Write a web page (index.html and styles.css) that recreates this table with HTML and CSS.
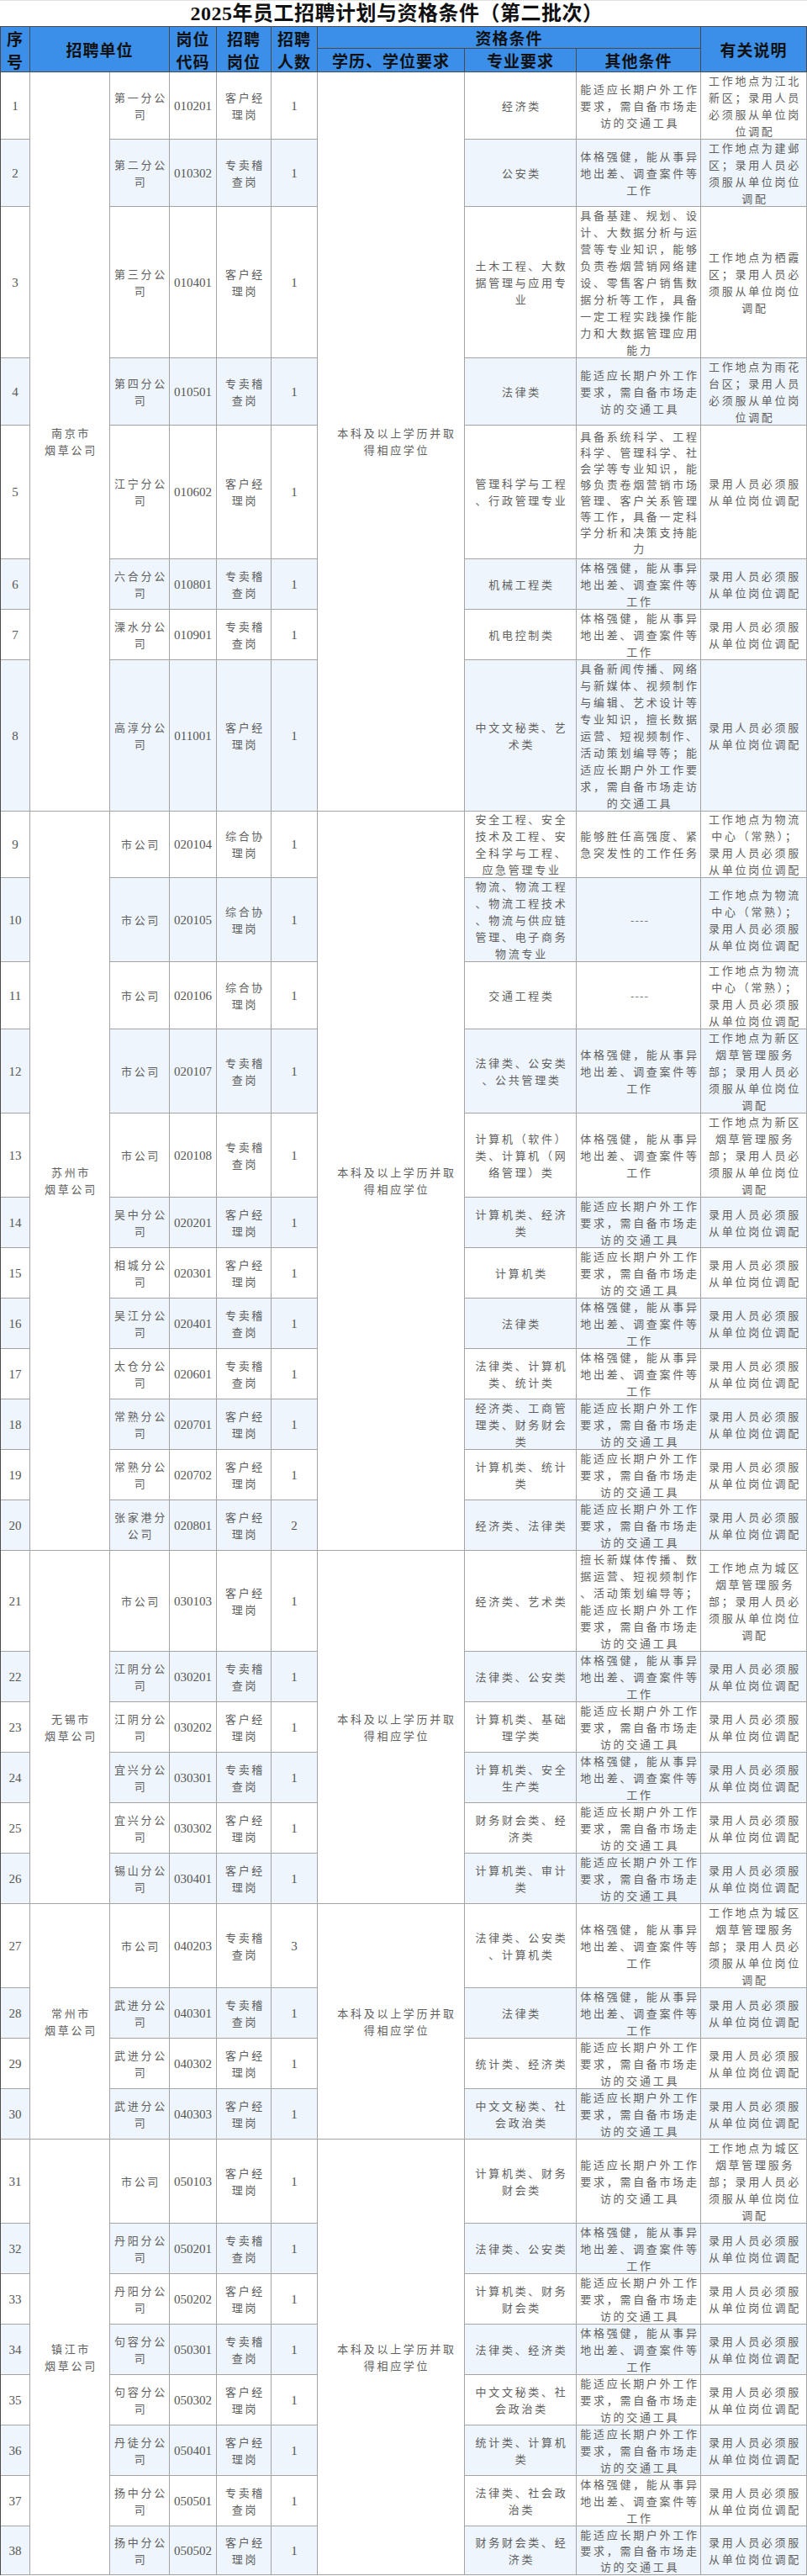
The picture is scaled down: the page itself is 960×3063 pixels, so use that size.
FILE: index.html
```html
<!DOCTYPE html>
<html lang="zh-CN">
<head>
<meta charset="utf-8">
<title>2025年员工招聘计划与资格条件（第二批次）</title>
<link rel="stylesheet" href="styles.css">
</head>
<body>
<div class="title">2025年员工招聘计划与资格条件（第二批次）</div>
<div class="grid">
<div class="row head">
<div class="h r2">序<br>号</div><div class="h r2 s2">招聘单位</div><div class="h r2">岗位<br>代码</div><div class="h r2">招聘<br>岗位</div><div class="h r2">招聘<br>人数</div><div class="h s3">资格条件</div><div class="h r2">有关说明</div>
<div class="h">学历、学位要求</div><div class="h">专业要求</div><div class="h">其他条件</div>
</div>

<div class="row"><div class="c n">1</div><div class="c m r8">南京市<br>烟草公司</div><div class="c">第一分公<br>司</div><div class="c n">010201</div><div class="c">客户经<br>理岗</div><div class="c n">1</div><div class="c m r8 edu">本科及以上学历并取<br>得相应学位</div><div class="c">经济类</div><div class="c">能适应长期户外工作<br>要求，需自备市场走<br>访的交通工具</div><div class="c">工作地点为江北<br>新区；录用人员<br>必须服从单位岗<br>位调配</div></div>
<div class="row alt"><div class="c n">2</div><div class="c">第二分公<br>司</div><div class="c n">010302</div><div class="c">专卖稽<br>查岗</div><div class="c n">1</div><div class="c">公安类</div><div class="c">体格强健，能从事异<br>地出差、调查案件等<br>工作</div><div class="c">工作地点为建邺<br>区；录用人员必<br>须服从单位岗位<br>调配</div></div>
<div class="row"><div class="c n">3</div><div class="c">第三分公<br>司</div><div class="c n">010401</div><div class="c">客户经<br>理岗</div><div class="c n">1</div><div class="c">土木工程、大数<br>据管理与应用专<br>业</div><div class="c">具备基建、规划、设<br>计、大数据分析与运<br>营等专业知识，能够<br>负责卷烟营销网络建<br>设、零售客户销售数<br>据分析等工作，具备<br>一定工程实践操作能<br>力和大数据管理应用<br>能力</div><div class="c">工作地点为栖霞<br>区；录用人员必<br>须服从单位岗位<br>调配</div></div>
<div class="row alt"><div class="c n">4</div><div class="c">第四分公<br>司</div><div class="c n">010501</div><div class="c">专卖稽<br>查岗</div><div class="c n">1</div><div class="c">法律类</div><div class="c">能适应长期户外工作<br>要求，需自备市场走<br>访的交通工具</div><div class="c">工作地点为雨花<br>台区；录用人员<br>必须服从单位岗<br>位调配</div></div>
<div class="row"><div class="c n">5</div><div class="c">江宁分公<br>司</div><div class="c n">010602</div><div class="c">客户经<br>理岗</div><div class="c n">1</div><div class="c">管理科学与工程<br>、行政管理专业</div><div class="c tight">具备系统科学、工程<br>科学、管理科学、社<br>会学等专业知识，能<br>够负责卷烟营销市场<br>管理、客户关系管理<br>等工作，具备一定科<br>学分析和决策支持能<br>力</div><div class="c">录用人员必须服<br>从单位岗位调配</div></div>
<div class="row alt"><div class="c n">6</div><div class="c">六合分公<br>司</div><div class="c n">010801</div><div class="c">专卖稽<br>查岗</div><div class="c n">1</div><div class="c">机械工程类</div><div class="c">体格强健，能从事异<br>地出差、调查案件等<br>工作</div><div class="c">录用人员必须服<br>从单位岗位调配</div></div>
<div class="row"><div class="c n">7</div><div class="c">溧水分公<br>司</div><div class="c n">010901</div><div class="c">专卖稽<br>查岗</div><div class="c n">1</div><div class="c">机电控制类</div><div class="c">体格强健，能从事异<br>地出差、调查案件等<br>工作</div><div class="c">录用人员必须服<br>从单位岗位调配</div></div>
<div class="row alt"><div class="c n">8</div><div class="c">高淳分公<br>司</div><div class="c n">011001</div><div class="c">客户经<br>理岗</div><div class="c n">1</div><div class="c">中文文秘类、艺<br>术类</div><div class="c">具备新闻传播、网络<br>与新媒体、视频制作<br>与编辑、艺术设计等<br>专业知识，擅长数据<br>运营、短视频制作、<br>活动策划编导等；能<br>适应长期户外工作要<br>求，需自备市场走访<br>的交通工具</div><div class="c">录用人员必须服<br>从单位岗位调配</div></div>

<div class="row"><div class="c n">9</div><div class="c m r12">苏州市<br>烟草公司</div><div class="c">市公司</div><div class="c n">020104</div><div class="c">综合协<br>理岗</div><div class="c n">1</div><div class="c m r12 edu">本科及以上学历并取<br>得相应学位</div><div class="c">安全工程、安全<br>技术及工程、安<br>全科学与工程、<br>应急管理专业</div><div class="c">能够胜任高强度、紧<br>急突发性的工作任务</div><div class="c">工作地点为物流<br>中心（常熟）；<br>录用人员必须服<br>从单位岗位调配</div></div>
<div class="row alt"><div class="c n">10</div><div class="c">市公司</div><div class="c n">020105</div><div class="c">综合协<br>理岗</div><div class="c n">1</div><div class="c">物流、物流工程<br>、物流工程技术<br>、物流与供应链<br>管理、电子商务<br>物流专业</div><div class="c dash">----</div><div class="c">工作地点为物流<br>中心（常熟）；<br>录用人员必须服<br>从单位岗位调配</div></div>
<div class="row"><div class="c n">11</div><div class="c">市公司</div><div class="c n">020106</div><div class="c">综合协<br>理岗</div><div class="c n">1</div><div class="c">交通工程类</div><div class="c dash">----</div><div class="c">工作地点为物流<br>中心（常熟）；<br>录用人员必须服<br>从单位岗位调配</div></div>
<div class="row alt"><div class="c n">12</div><div class="c">市公司</div><div class="c n">020107</div><div class="c">专卖稽<br>查岗</div><div class="c n">1</div><div class="c">法律类、公安类<br>、公共管理类</div><div class="c">体格强健，能从事异<br>地出差、调查案件等<br>工作</div><div class="c">工作地点为新区<br>烟草管理服务<br>部；录用人员必<br>须服从单位岗位<br>调配</div></div>
<div class="row"><div class="c n">13</div><div class="c">市公司</div><div class="c n">020108</div><div class="c">专卖稽<br>查岗</div><div class="c n">1</div><div class="c">计算机（软件）<br>类、计算机（网<br>络管理）类</div><div class="c">体格强健，能从事异<br>地出差、调查案件等<br>工作</div><div class="c">工作地点为新区<br>烟草管理服务<br>部；录用人员必<br>须服从单位岗位<br>调配</div></div>
<div class="row alt"><div class="c n">14</div><div class="c">吴中分公<br>司</div><div class="c n">020201</div><div class="c">客户经<br>理岗</div><div class="c n">1</div><div class="c">计算机类、经济<br>类</div><div class="c">能适应长期户外工作<br>要求，需自备市场走<br>访的交通工具</div><div class="c">录用人员必须服<br>从单位岗位调配</div></div>
<div class="row"><div class="c n">15</div><div class="c">相城分公<br>司</div><div class="c n">020301</div><div class="c">客户经<br>理岗</div><div class="c n">1</div><div class="c">计算机类</div><div class="c">能适应长期户外工作<br>要求，需自备市场走<br>访的交通工具</div><div class="c">录用人员必须服<br>从单位岗位调配</div></div>
<div class="row alt"><div class="c n">16</div><div class="c">吴江分公<br>司</div><div class="c n">020401</div><div class="c">专卖稽<br>查岗</div><div class="c n">1</div><div class="c">法律类</div><div class="c">体格强健，能从事异<br>地出差、调查案件等<br>工作</div><div class="c">录用人员必须服<br>从单位岗位调配</div></div>
<div class="row"><div class="c n">17</div><div class="c">太仓分公<br>司</div><div class="c n">020601</div><div class="c">专卖稽<br>查岗</div><div class="c n">1</div><div class="c">法律类、计算机<br>类、统计类</div><div class="c">体格强健，能从事异<br>地出差、调查案件等<br>工作</div><div class="c">录用人员必须服<br>从单位岗位调配</div></div>
<div class="row alt"><div class="c n">18</div><div class="c">常熟分公<br>司</div><div class="c n">020701</div><div class="c">客户经<br>理岗</div><div class="c n">1</div><div class="c">经济类、工商管<br>理类、财务财会<br>类</div><div class="c">能适应长期户外工作<br>要求，需自备市场走<br>访的交通工具</div><div class="c">录用人员必须服<br>从单位岗位调配</div></div>
<div class="row"><div class="c n">19</div><div class="c">常熟分公<br>司</div><div class="c n">020702</div><div class="c">客户经<br>理岗</div><div class="c n">1</div><div class="c">计算机类、统计<br>类</div><div class="c">能适应长期户外工作<br>要求，需自备市场走<br>访的交通工具</div><div class="c">录用人员必须服<br>从单位岗位调配</div></div>
<div class="row alt"><div class="c n">20</div><div class="c">张家港分<br>公司</div><div class="c n">020801</div><div class="c">客户经<br>理岗</div><div class="c n">2</div><div class="c">经济类、法律类</div><div class="c">能适应长期户外工作<br>要求，需自备市场走<br>访的交通工具</div><div class="c">录用人员必须服<br>从单位岗位调配</div></div>

<div class="row"><div class="c n">21</div><div class="c m r6">无锡市<br>烟草公司</div><div class="c">市公司</div><div class="c n">030103</div><div class="c">客户经<br>理岗</div><div class="c n">1</div><div class="c m r6 edu">本科及以上学历并取<br>得相应学位</div><div class="c">经济类、艺术类</div><div class="c">擅长新媒体传播、数<br>据运营、短视频制作<br>、活动策划编导等；<br>能适应长期户外工作<br>要求，需自备市场走<br>访的交通工具</div><div class="c">工作地点为城区<br>烟草管理服务<br>部；录用人员必<br>须服从单位岗位<br>调配</div></div>
<div class="row alt"><div class="c n">22</div><div class="c">江阴分公<br>司</div><div class="c n">030201</div><div class="c">专卖稽<br>查岗</div><div class="c n">1</div><div class="c">法律类、公安类</div><div class="c">体格强健，能从事异<br>地出差、调查案件等<br>工作</div><div class="c">录用人员必须服<br>从单位岗位调配</div></div>
<div class="row"><div class="c n">23</div><div class="c">江阴分公<br>司</div><div class="c n">030202</div><div class="c">客户经<br>理岗</div><div class="c n">1</div><div class="c">计算机类、基础<br>理学类</div><div class="c">能适应长期户外工作<br>要求，需自备市场走<br>访的交通工具</div><div class="c">录用人员必须服<br>从单位岗位调配</div></div>
<div class="row alt"><div class="c n">24</div><div class="c">宜兴分公<br>司</div><div class="c n">030301</div><div class="c">专卖稽<br>查岗</div><div class="c n">1</div><div class="c">计算机类、安全<br>生产类</div><div class="c">体格强健，能从事异<br>地出差、调查案件等<br>工作</div><div class="c">录用人员必须服<br>从单位岗位调配</div></div>
<div class="row"><div class="c n">25</div><div class="c">宜兴分公<br>司</div><div class="c n">030302</div><div class="c">客户经<br>理岗</div><div class="c n">1</div><div class="c">财务财会类、经<br>济类</div><div class="c">能适应长期户外工作<br>要求，需自备市场走<br>访的交通工具</div><div class="c">录用人员必须服<br>从单位岗位调配</div></div>
<div class="row alt"><div class="c n">26</div><div class="c">锡山分公<br>司</div><div class="c n">030401</div><div class="c">客户经<br>理岗</div><div class="c n">1</div><div class="c">计算机类、审计<br>类</div><div class="c">能适应长期户外工作<br>要求，需自备市场走<br>访的交通工具</div><div class="c">录用人员必须服<br>从单位岗位调配</div></div>

<div class="row"><div class="c n">27</div><div class="c m r4">常州市<br>烟草公司</div><div class="c">市公司</div><div class="c n">040203</div><div class="c">专卖稽<br>查岗</div><div class="c n">3</div><div class="c m r4 edu">本科及以上学历并取<br>得相应学位</div><div class="c">法律类、公安类<br>、计算机类</div><div class="c">体格强健，能从事异<br>地出差、调查案件等<br>工作</div><div class="c">工作地点为城区<br>烟草管理服务<br>部；录用人员必<br>须服从单位岗位<br>调配</div></div>
<div class="row alt"><div class="c n">28</div><div class="c">武进分公<br>司</div><div class="c n">040301</div><div class="c">专卖稽<br>查岗</div><div class="c n">1</div><div class="c">法律类</div><div class="c">体格强健，能从事异<br>地出差、调查案件等<br>工作</div><div class="c">录用人员必须服<br>从单位岗位调配</div></div>
<div class="row"><div class="c n">29</div><div class="c">武进分公<br>司</div><div class="c n">040302</div><div class="c">客户经<br>理岗</div><div class="c n">1</div><div class="c">统计类、经济类</div><div class="c">能适应长期户外工作<br>要求，需自备市场走<br>访的交通工具</div><div class="c">录用人员必须服<br>从单位岗位调配</div></div>
<div class="row alt"><div class="c n">30</div><div class="c">武进分公<br>司</div><div class="c n">040303</div><div class="c">客户经<br>理岗</div><div class="c n">1</div><div class="c">中文文秘类、社<br>会政治类</div><div class="c">能适应长期户外工作<br>要求，需自备市场走<br>访的交通工具</div><div class="c">录用人员必须服<br>从单位岗位调配</div></div>

<div class="row"><div class="c n">31</div><div class="c m r8">镇江市<br>烟草公司</div><div class="c">市公司</div><div class="c n">050103</div><div class="c">客户经<br>理岗</div><div class="c n">1</div><div class="c m r8 edu">本科及以上学历并取<br>得相应学位</div><div class="c">计算机类、财务<br>财会类</div><div class="c">能适应长期户外工作<br>要求，需自备市场走<br>访的交通工具</div><div class="c">工作地点为城区<br>烟草管理服务<br>部；录用人员必<br>须服从单位岗位<br>调配</div></div>
<div class="row alt"><div class="c n">32</div><div class="c">丹阳分公<br>司</div><div class="c n">050201</div><div class="c">专卖稽<br>查岗</div><div class="c n">1</div><div class="c">法律类、公安类</div><div class="c">体格强健，能从事异<br>地出差、调查案件等<br>工作</div><div class="c">录用人员必须服<br>从单位岗位调配</div></div>
<div class="row"><div class="c n">33</div><div class="c">丹阳分公<br>司</div><div class="c n">050202</div><div class="c">客户经<br>理岗</div><div class="c n">1</div><div class="c">计算机类、财务<br>财会类</div><div class="c">能适应长期户外工作<br>要求，需自备市场走<br>访的交通工具</div><div class="c">录用人员必须服<br>从单位岗位调配</div></div>
<div class="row alt"><div class="c n">34</div><div class="c">句容分公<br>司</div><div class="c n">050301</div><div class="c">专卖稽<br>查岗</div><div class="c n">1</div><div class="c">法律类、经济类</div><div class="c">体格强健，能从事异<br>地出差、调查案件等<br>工作</div><div class="c">录用人员必须服<br>从单位岗位调配</div></div>
<div class="row"><div class="c n">35</div><div class="c">句容分公<br>司</div><div class="c n">050302</div><div class="c">客户经<br>理岗</div><div class="c n">1</div><div class="c">中文文秘类、社<br>会政治类</div><div class="c">能适应长期户外工作<br>要求，需自备市场走<br>访的交通工具</div><div class="c">录用人员必须服<br>从单位岗位调配</div></div>
<div class="row alt"><div class="c n">36</div><div class="c">丹徒分公<br>司</div><div class="c n">050401</div><div class="c">客户经<br>理岗</div><div class="c n">1</div><div class="c">统计类、计算机<br>类</div><div class="c">能适应长期户外工作<br>要求，需自备市场走<br>访的交通工具</div><div class="c">录用人员必须服<br>从单位岗位调配</div></div>
<div class="row"><div class="c n">37</div><div class="c">扬中分公<br>司</div><div class="c n">050501</div><div class="c">专卖稽<br>查岗</div><div class="c n">1</div><div class="c">法律类、社会政<br>治类</div><div class="c">体格强健，能从事异<br>地出差、调查案件等<br>工作</div><div class="c">录用人员必须服<br>从单位岗位调配</div></div>
<div class="row alt"><div class="c n">38</div><div class="c">扬中分公<br>司</div><div class="c n">050502</div><div class="c">客户经<br>理岗</div><div class="c n">1</div><div class="c">财务财会类、经<br>济类</div><div class="c tight">能适应长期户外工作<br>要求，需自备市场走<br>访的交通工具</div><div class="c">录用人员必须服<br>从单位岗位调配</div></div>
</div>
</body>
</html>
```

FILE: styles.css
```css
html, body {
  margin: 0;
  padding: 0;
  background: #ffffff;
}

body {
  width: 960px;
  font-family: "Noto Sans CJK SC", sans-serif;
}

.title {
  box-sizing: border-box;
  height: 31px;
  line-height: 30px;
  padding-right: 16px;
  text-align: center;
  font-family: "Liberation Serif", "Noto Sans CJK SC", serif;
  font-weight: bold;
  font-size: 24px;
  letter-spacing: 0.5px;
  color: #111111;
  border-top: 1px solid #e2e2e2;
}

.grid {
  display: grid;
  width: 960px;
  box-sizing: border-box;
  border-left: 1px solid #4a4a4a;
  border-top: 1px solid #4a4a4a;
  grid-template-columns: 35px 95px 71px 56px 65px 55px 175px 133px 148px 126px;
  grid-template-rows:
    26px 28px
    80px 80px 180px 80px 159px 60px 60px 180px
    79px 100px 80px 100px 100px 60px 60px 60px 60px 60px 60px 60px
    120px 60px 60px 60px 60px 60px
    100px 60px 60px 60px
    100px 60px 60px 60px 60px 60px 60px 58px;
}

.row {
  display: contents;
}

.h,
.c {
  box-sizing: border-box;
  display: flex;
  align-items: center;
  justify-content: center;
  text-align: center;
  overflow: hidden;
  white-space: nowrap;
}

.h {
  background: #3b8fe8;
  color: #111111;
  font-weight: bold;
  font-size: 19px;
  letter-spacing: 1px;
  line-height: 27px;
  border-right: 1px solid #4a4a4a;
  border-bottom: 1px solid #4a4a4a;
}

.r2 { grid-row: span 2; }
.s2 { grid-column: span 2; }
.s3 { grid-column: span 3; }
.r4 { grid-row: span 4; }
.r6 { grid-row: span 6; }
.r8 { grid-row: span 8; }
.r12 { grid-row: span 12; }

.c {
  background: #ffffff;
  border-right: 1px solid #a3a3a3;
  border-bottom: 1px solid #a3a3a3;
  padding-left: 3px;
  font-size: 13px;
  letter-spacing: 2.7px;
  line-height: 20px;
  color: #5f5f5f;
}

.row.alt > .c {
  background: #eef5fd;
}

.c.m {
  background: #ffffff;
}

.c.n {
  padding-left: 0;
  font-family: "Liberation Serif", serif;
  font-size: 15px;
  letter-spacing: 0;
  color: #555555;
}

.c.edu {
  padding-left: 14px;
}

.c.dash {
  letter-spacing: 1px;
  color: #777777;
}

.c.tight {
  line-height: 19px;
}
```
